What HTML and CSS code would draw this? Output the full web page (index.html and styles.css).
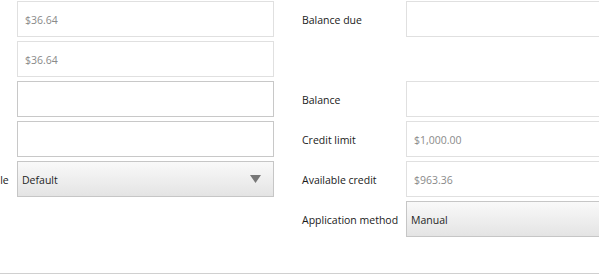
FILE: index.html
```html
<!DOCTYPE html>
<html>
<head>
<meta charset="utf-8">
<link rel="stylesheet" href="styles.css">
</head>
<body>
<div class="page">
  <div class="cols">
    <div class="col col-left">
      <div class="row"><span class="label"></span><div class="field ro">$36.64</div></div>
      <div class="row"><span class="label"></span><div class="field ro">$36.64</div></div>
      <div class="row"><span class="label"></span><div class="field edit"></div></div>
      <div class="row"><span class="label"></span><div class="field edit"></div></div>
      <div class="row"><span class="label">Payment schedule</span><div class="field select"><span>Default</span><svg class="arrow" width="11" height="8" viewBox="0 0 11 8"><path d="M0 0H11L5.5 8Z" fill="#777"/></svg></div></div>
    </div>
    <div class="col col-right">
      <div class="row"><span class="label">Balance due</span><div class="field ro"></div></div>
      <div class="row"></div>
      <div class="row"><span class="label">Balance</span><div class="field ro"></div></div>
      <div class="row"><span class="label">Credit limit</span><div class="field ro">$1,000.00</div></div>
      <div class="row"><span class="label">Available credit</span><div class="field ro">$963.36</div></div>
      <div class="row"><span class="label">Application method</span><div class="field select"><span>Manual</span></div></div>
    </div>
  </div>
  <div class="rule"></div>
</div>
</body>
</html>
```
FILE: styles.css
```css
html, body {
  margin: 0;
  padding: 0;
  background: #fff;
  overflow: hidden;
}
body {
  font-family: "Open Sans", "Noto Sans", sans-serif;
  font-size: 10.5px;
  color: #1a1a1a;
}
.page {
  width: 599px;
  height: 275px;
  overflow: hidden;
  padding-top: 1px;
  box-sizing: border-box;
}
.cols {
  display: flex;
  gap: 28px;
  height: 271px;
}
.col {
  display: flex;
  flex-direction: column;
  gap: 4px;
  flex: none;
}
.col-left {
  margin-left: -87px;
}
.col-right {
  width: 400px;
}
.row {
  display: flex;
  align-items: center;
  height: 36px;
}
.label {
  width: 104px;
  flex: none;
  white-space: nowrap;
  overflow: visible;
  padding-top: 2px;
  box-sizing: border-box;
}
.col-left .label {
  padding-left: 6px;
}
.field {
  box-sizing: border-box;
  height: 36px;
  width: 257px;
  border: 1px solid #e0e0e0;
  background: #fff;
  display: flex;
  align-items: center;
  padding-left: 7px;
  padding-top: 2px;
  color: #8a8a8a;
  flex: none;
}
.col-right .field {
  width: 300px;
}
.field.edit {
  border-color: #c8c8c8;
}
.field.select {
  border-color: #c6c6c6;
  background: linear-gradient(#f9f9f9, #e4e4e4);
  color: #1e1e1e;
  padding-left: 4px;
  justify-content: space-between;
  padding-right: 12px;
}
.arrow {
  display: block;
  margin-top: -2px;
}
.rule {
  height: 1px;
  background: #d0d0d0;
  margin-top: 1px;
}
```
